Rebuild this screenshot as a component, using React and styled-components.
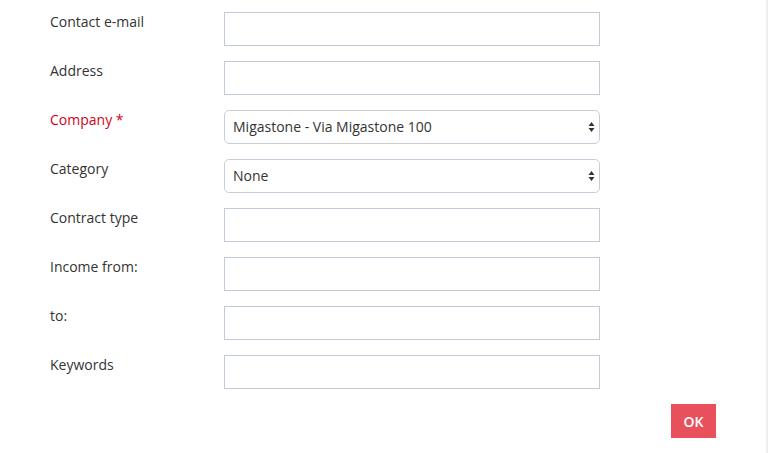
import React from "react";
import styled, { createGlobalStyle } from "styled-components";

const GlobalStyle = createGlobalStyle`
  html, body {
    margin: 0;
    padding: 0;
    background: #ffffff;
  }
  body {
    font-family: "Open Sans", "Liberation Sans", sans-serif;
    font-size: 14px;
    color: #333333;
  }
`;

const fields = [
  { label: "Contact e-mail", type: "text" },
  { label: "Address", type: "text" },
  { label: "Company", type: "select", required: true, value: "Migastone - Via Migastone 100" },
  { label: "Category", type: "select", value: "None" },
  { label: "Contract type", type: "text" },
  { label: "Income from:", type: "text" },
  { label: "to:", type: "text" },
  { label: "Keywords", type: "text" },
];

const SelectArrows = () => (
  <svg width="7" height="12" viewBox="0 0 7 12">
    <path d="M3.5 1 L6.5 5 L0.5 5 Z" fill="#333" />
    <path d="M3.5 11 L6.5 7 L0.5 7 Z" fill="#333" />
  </svg>
);

const App = () => {
  return (
    <Page>
      <GlobalStyle />
      <Content>
        <Form onSubmit={(e) => e.preventDefault()}>
          {fields.map((f) => (
            <Row key={f.label}>
              <Label required={f.required}>
                {f.label}
                {f.required && " *"}
              </Label>
              {f.type === "select" ? (
                <SelectWrap>
                  <Select defaultValue={f.value}>
                    <option>{f.value}</option>
                  </Select>
                  <Arrows>
                    <SelectArrows />
                  </Arrows>
                </SelectWrap>
              ) : (
                <Input type="text" />
              )}
            </Row>
          ))}
          <Footer>
            <OkButton type="submit">OK</OkButton>
          </Footer>
        </Form>
      </Content>
      <Edge />
    </Page>
  );
};

export default App;

const Page = styled.div`
  display: flex;
  width: 768px;
  min-height: 453px;
`;

const Content = styled.div`
  flex: 1;
  padding: 12px 0 0 50px;
`;

const Edge = styled.div`
  width: 2px;
  background: #eceff4;
`;

const Form = styled.form`
  width: 666px;
  display: flex;
  flex-direction: column;
  gap: 15px;
`;

const Row = styled.div`
  display: grid;
  grid-template-columns: 174px 376px;
  align-items: start;
`;

const Label = styled.label`
  line-height: 20px;
  color: ${({ required }) => (required ? "#d0021b" : "#333333")};
`;

const Input = styled.input`
  box-sizing: border-box;
  width: 376px;
  height: 34px;
  border: 1px solid #c3cad8;
  border-radius: 0;
  padding: 6px 8px;
  font: inherit;
  outline: none;
`;

const SelectWrap = styled.div`
  position: relative;
  width: 376px;
  height: 34px;
`;

const Select = styled.select`
  appearance: none;
  -webkit-appearance: none;
  box-sizing: border-box;
  width: 100%;
  height: 34px;
  border: 1px solid #c8ced9;
  border-radius: 5px;
  background: #ffffff;
  padding: 0 24px 2px 8px;
  font: inherit;
  color: #333333;
  outline: none;
`;

const Arrows = styled.span`
  position: absolute;
  right: 5px;
  top: 11px;
  display: flex;
  pointer-events: none;
`;

const Footer = styled.div`
  display: flex;
  justify-content: flex-end;
`;

const OkButton = styled.button`
  width: 45px;
  height: 34px;
  border: none;
  border-radius: 0;
  background: #e8505b;
  color: #ffffff;
  font-family: "Open Sans", "Liberation Sans", sans-serif;
  font-size: 14px;
  font-weight: 600;
  cursor: pointer;
`;
